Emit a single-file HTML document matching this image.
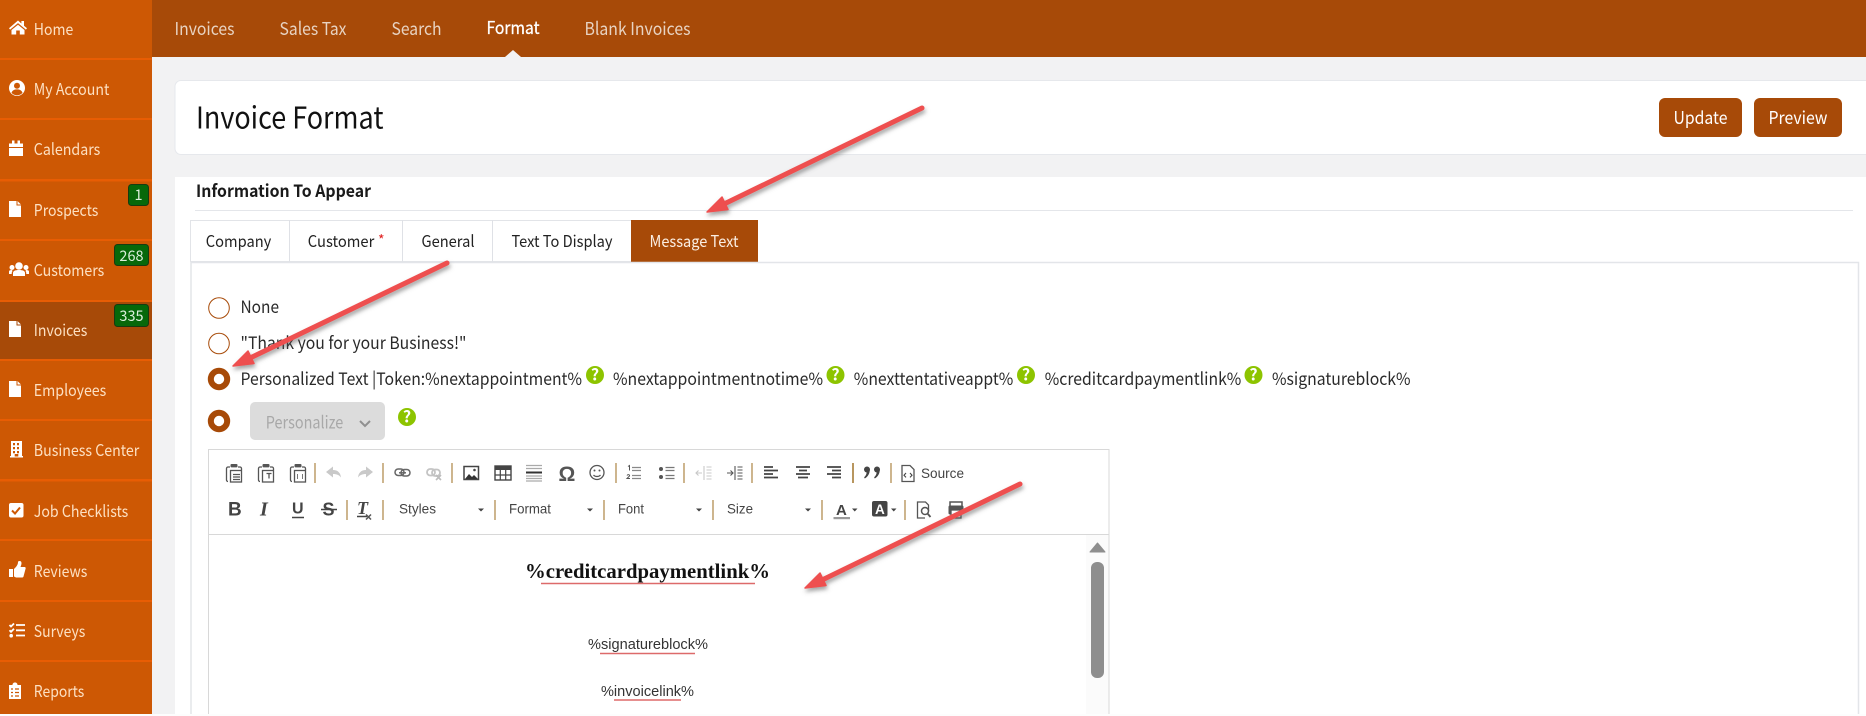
<!DOCTYPE html>
<html lang="en"><head><meta charset="utf-8"><title>Invoice Format</title>
<style>
html,body{margin:0;padding:0;background:#fff;width:1866px;height:716px;overflow:hidden}
svg{display:block}
text{font-family:"Noto Sans CJK JP","Liberation Sans",sans-serif}
.side{font-size:16px;fill:#fde0c2}
.nav{font-size:17.6px;fill:#e8d3c2}
.lab{font-size:17px;fill:#2a2a2a}
.tab{font-size:16px;fill:#222}
.ck{font-family:"Liberation Sans",sans-serif;font-size:14px;fill:#444}
.ic{fill:#fff}
.o{fill:#cd5804}
.sp{stroke:#b8965f;stroke-width:1.4}
.t{fill:none;stroke:#555;stroke-width:1.3}
.f{fill:#555}
.q{font-size:16px;font-weight:700;fill:#fff;text-anchor:middle}
.red{fill:none;stroke:#dd6a6a;stroke-width:1.6}
</style></head><body>
<svg xmlns="http://www.w3.org/2000/svg" width="1866" height="716" viewBox="0 0 1866 716">
<defs>
<filter id="sh" x="-10%" y="-10%" width="120%" height="130%"><feDropShadow dx="1" dy="3" stdDeviation="2" flood-color="#555" flood-opacity=".55"/></filter>
<g id="clip"><path class="t" d="M-4-6h-2a1.5 1.5 0 0 0-1.5 1.5V7A1.5 1.5 0 0 0-6 8.5M4-6h2a1.5 1.5 0 0 1 1.5 1.5v1.5"/><rect class="f" x="-3.5" y="-9" width="7" height="3.4" rx="1"/><rect class="t" x="-3.5" y="-2.5" width="11" height="11.5"/></g>
<path id="file" d="M0 0h7.500v4.500H12V16H0zM8.500 0 12 3.500H8.500z"/>
</defs>

<!-- page background -->
<rect width="1866" height="716" fill="#f2f2f3"/>
<!-- sidebar -->
<rect width="152" height="714" fill="#cd5804"/>
<rect y="301" width="152" height="58" fill="#a74a08"/>
<g fill="#e85d04">
<rect y="58" width="152" height="2"/><rect y="118" width="152" height="2"/><rect y="179" width="152" height="2.500"/><rect y="239" width="152" height="2"/><rect y="300" width="152" height="2"/><rect y="359" width="152" height="2"/><rect y="419" width="152" height="2"/><rect y="479" width="152" height="2.500"/><rect y="539" width="152" height="2"/><rect y="600" width="152" height="2"/><rect y="660" width="152" height="2"/>
</g>
<g class="side">
<text x="33.800" y="35" lengthAdjust="spacingAndGlyphs" textLength="39.500">Home</text>
<text x="33.800" y="95" lengthAdjust="spacingAndGlyphs" textLength="75.500">My Account</text>
<text x="33.800" y="155" lengthAdjust="spacingAndGlyphs" textLength="66.500">Calendars</text>
<text x="33.800" y="216" lengthAdjust="spacingAndGlyphs" textLength="64.500">Prospects</text>
<text x="33.800" y="276" lengthAdjust="spacingAndGlyphs" textLength="70.500">Customers</text>
<text x="33.800" y="336" lengthAdjust="spacingAndGlyphs" textLength="53.500">Invoices</text>
<text x="33.800" y="396" lengthAdjust="spacingAndGlyphs" textLength="72.500">Employees</text>
<text x="33.800" y="456" lengthAdjust="spacingAndGlyphs" textLength="105.500">Business Center</text>
<text x="33.800" y="517" lengthAdjust="spacingAndGlyphs" textLength="94.500">Job Checklists</text>
<text x="33.800" y="577" lengthAdjust="spacingAndGlyphs" textLength="53.500">Reviews</text>
<text x="33.800" y="637" lengthAdjust="spacingAndGlyphs" textLength="51.500">Surveys</text>
<text x="33.800" y="697" lengthAdjust="spacingAndGlyphs" textLength="50.500">Reports</text>
</g>
<!-- sidebar icons -->
<path class="ic" d="M18 20.500 9 28.200l1.100 1.400L18 23.100l7.900 6.500 1.100-1.400-3-2.500v-4.700h-2.600v2.500zM18 24.700 11.500 30v4.500h4.700V30.500h3.600v4h4.700V30z"/>
<circle class="ic" cx="17" cy="88" r="8"/><circle class="o" cx="17" cy="85.800" r="3"/><path class="o" d="M11.500 92.700c1-2.500 3-3.300 5.500-3.300s4.500.8 5.500 3.300a7 7 0 0 1-11 0z"/>
<path class="ic" d="M9 143.500h3v-3h2.500v3h3v-3H20v3h3v3.500H9zM9 148h14v8H9z"/>
<use href="#file" class="ic" x="9" y="201"/>
<g class="ic"><circle cx="19" cy="266" r="3.800"/><circle cx="12" cy="267.500" r="2.500"/><circle cx="26" cy="267.500" r="2.500"/><path d="M13 276v-3c0-2 2-3 6-3s6 1 6 3v3zM9 274v-2.500c0-1 1-1.500 3-1.500l.5 1c-.6.800-.8 1.500-.8 3zM29 274v-2.500c0-1-1-1.500-3-1.500l-.5 1c.6.800.8 1.500.8 3z"/></g>
<use href="#file" class="ic" x="9" y="321"/>
<use href="#file" class="ic" x="9" y="381"/>
<path class="ic" fill-rule="evenodd" d="M11 441h11v15h1v1.500H10V456h1zM13 443v2.200h2V443zm4 0v2.200h2V443zM13 447v2.200h2V447zm4 0v2.200h2V447zM13 451v2.200h2V451zm4 0v2.200h2V451zM14.700 454v2.500h3.600V454z"/>
<rect class="ic" x="9" y="503" width="14.500" height="14.500" rx="2"/><path d="M12 510.500l3 3 5-6" fill="none" stroke="#cd5804" stroke-width="2"/>
<path class="ic" d="M9 569h4v8H9zM14 569c2-2 4-4 4-7 0-1 2-1.500 3-.5 1 1.500.3 3.500-.5 5.500h4c1 0 1.500 1 1 2l-2 7.500c-.2.700-.8 1-1.500 1H16l-2-1z"/>
<g fill="none" stroke="#fff" stroke-width="1.800"><path d="M16 625h9M16 630.300h9M16 635.500h9M9.500 625l1.500 1.500 3-3M9.500 630.300l1.500 1.500 3-3"/></g><circle class="ic" cx="11.200" cy="635.700" r="1.800"/>
<path class="ic" d="M9 685h3.500c0-1.500 1-2.500 2.500-2.500s2.500 1 2.500 2.500H21v14H9z"/><path d="M15 689h4M15 692.500h4M15 696h4M11 689h2M11 692.500h2M11 696h2" stroke="#cd5804" stroke-width="1.300"/>
<!-- badges -->
<g fill="#07680a" stroke="#173c10" stroke-width="1">
<rect x="128.500" y="184.500" width="20" height="21" rx="3"/>
<rect x="114.500" y="244.500" width="34" height="21" rx="3"/>
<rect x="114.500" y="304.500" width="34" height="22" rx="3"/>
</g>
<g font-size="14.500" fill="#dcefdc" text-anchor="middle">
<text x="138.500" y="200">1</text><text x="131.500" y="261">268</text><text x="131.500" y="321">335</text>
</g>

<!-- top bar -->
<rect x="152" width="1714" height="57" fill="#a74a08"/>
<g class="nav">
<text x="174.500" y="35" lengthAdjust="spacingAndGlyphs" textLength="60">Invoices</text>
<text x="279.500" y="35" lengthAdjust="spacingAndGlyphs" textLength="67">Sales Tax</text>
<text x="391.500" y="35" lengthAdjust="spacingAndGlyphs" textLength="50">Search</text>
<text x="584.500" y="35" lengthAdjust="spacingAndGlyphs" textLength="106">Blank Invoices</text>
</g>
<text x="486.500" y="34" font-size="17.600" fill="#fff" stroke="#fff" stroke-width=".3" lengthAdjust="spacingAndGlyphs" textLength="53">Format</text>
<path d="M505 57l8-7 8 7z" fill="#f2f2f3"/>

<!-- header card -->
<rect x="175" y="80.500" width="1700" height="74" rx="6" fill="#fff" stroke="#e6e8ec"/>
<text x="196" y="128.700" font-size="30" fill="#111" lengthAdjust="spacingAndGlyphs" textLength="187.500">Invoice Format</text>
<rect x="1659" y="98" width="83" height="39" rx="6" fill="#a74a08"/>
<rect x="1754" y="98" width="88" height="39" rx="6" fill="#a74a08"/>
<text x="1673.500" y="124" font-size="17.500" fill="#fff" lengthAdjust="spacingAndGlyphs" textLength="54">Update</text>
<text x="1768.500" y="124" font-size="17.500" fill="#fff" lengthAdjust="spacingAndGlyphs" textLength="59">Preview</text>

<!-- main card -->
<rect x="175" y="177" width="1691" height="537" fill="#fff"/>
<text x="196" y="197" font-size="17" font-weight="700" fill="#1a1a1a" lengthAdjust="spacingAndGlyphs" textLength="175">Information To Appear</text>
<rect x="195" y="210" width="1658" height="1" fill="#e4e6ea"/>

<!-- tabs -->
<rect x="190.500" y="220.500" width="566" height="41" fill="#fff" stroke="#e2e4e8"/>
<g fill="#dfe1e6"><rect x="289" y="220" width="1" height="42"/><rect x="402" y="220" width="1" height="42"/><rect x="492" y="220" width="1" height="42"/></g>
<rect x="631" y="220" width="127" height="42" fill="#a74a08"/>
<g class="tab">
<text x="205.800" y="247" lengthAdjust="spacingAndGlyphs" textLength="65.500">Company</text>
<text x="307.800" y="247" lengthAdjust="spacingAndGlyphs" textLength="66.500">Customer</text>
<text x="421.500" y="247" lengthAdjust="spacingAndGlyphs" textLength="53">General</text>
<text x="511.500" y="247" lengthAdjust="spacingAndGlyphs" textLength="101">Text To Display</text>
</g>
<text x="378" y="245" font-size="14" fill="#e02020">*</text>
<text x="649.500" y="247" font-size="16" fill="#fbeee2" lengthAdjust="spacingAndGlyphs" textLength="89">Message Text</text>

<!-- panel -->
<path d="M191 714V262.500H1858.500V714" fill="none" stroke="#e3e5e9" stroke-width="1.500"/>

<!-- radios -->
<circle cx="219" cy="308" r="10.300" fill="#fff" stroke="#a74a08" stroke-width="1"/>
<circle cx="219" cy="343.500" r="10.300" fill="#fff" stroke="#a74a08" stroke-width="1"/>
<circle cx="219" cy="379" r="8.200" fill="#fff" stroke="#a74a08" stroke-width="6"/>
<circle cx="219" cy="421" r="8.200" fill="#fff" stroke="#a74a08" stroke-width="6"/>
<g class="lab">
<text x="240.500" y="313" lengthAdjust="spacingAndGlyphs" textLength="38.500">None</text>
<text x="240.500" y="349" lengthAdjust="spacingAndGlyphs" textLength="226">"Thank you for your Business!"</text>
<text x="240.500" y="385" lengthAdjust="spacingAndGlyphs" textLength="341.500">Personalized Text |Token:%nextappointment%</text>
<text x="613" y="385" lengthAdjust="spacingAndGlyphs" textLength="210">%nextappointmentnotime%</text>
<text x="853.800" y="385" lengthAdjust="spacingAndGlyphs" textLength="159.500">%nexttentativeappt%</text>
<text x="1044.800" y="385" lengthAdjust="spacingAndGlyphs" textLength="196.500">%creditcardpaymentlink%</text>
<text x="1272" y="385" lengthAdjust="spacingAndGlyphs" textLength="138.500">%signatureblock%</text>
</g>
<g fill="#8dc400"><circle cx="595" cy="375" r="9"/><circle cx="835.500" cy="375" r="9"/><circle cx="1026" cy="375" r="9"/><circle cx="1253.500" cy="375" r="9"/><circle cx="407" cy="417" r="9"/></g>
<g class="q"><text x="595" y="380.500">?</text><text x="835.500" y="380.500">?</text><text x="1026" y="380.500">?</text><text x="1253.500" y="380.500">?</text><text x="407" y="422.500">?</text></g>

<!-- personalize select -->
<rect x="250" y="402" width="135" height="38" rx="5" fill="#dcdcdc"/>
<text x="265.800" y="428.700" font-size="17" fill="#a8a8a8" lengthAdjust="spacingAndGlyphs" textLength="77.500">Personalize</text>
<path d="M360 421l5 5 5-5" fill="none" stroke="#909090" stroke-width="2"/>

<!-- editor -->
<rect x="208.500" y="449.500" width="900.500" height="270" fill="#fff" stroke="#d8d8d8"/>
<rect x="209" y="534" width="900" height="1" fill="#d8d8d8"/>
<rect x="1086" y="535" width="22.500" height="179" fill="#fbfbfb"/>

<!-- toolbar separators -->
<g class="sp">
<path d="M315 463v20M383 463v20M452 463v20M616 463v20M684 463v20M752 463v20M891 463v20"/>
<path d="M853 463v20" stroke-width="2"/>
<path d="M347 500v20M383 500v20M495 500v20M604 500v20M713 500v20M822 500v20M905 500v20"/>
</g>

<!-- toolbar row 1 -->
<use href="#clip" x="234" y="473"/><path class="t" d="M233 474.500h7M233 477h7M233 479.500h7" stroke-width="1"/>
<use href="#clip" x="266" y="473"/><path class="t" d="M269 473.500v5M266.500 473.500h5" stroke-width="1"/>
<use href="#clip" x="298" y="473"/><path d="M297.500 474v5M302.500 474v5" stroke="#777" stroke-width="1"/>
<path fill="#c9c9c9" d="M326 472l7-5.500v3.500c5 0 7.500 3 8 7.500-2-2.500-4-3.500-8-3.500v3.500z"/>
<path fill="#c9c9c9" d="M373 472l-7-5.500v3.500c-5 0-7.500 3-8 7.500 2-2.500 4-3.500 8-3.500v3.500z"/>
<g fill="none" stroke="#666" stroke-width="1.500"><rect x="395" y="469" width="9" height="6.500" rx="3.200"/><rect x="401" y="469.500" width="9" height="6.500" rx="3.200"/><path d="M399 472.800h7"/></g>
<g fill="none" stroke="#c4c4c4" stroke-width="1.800"><rect x="427" y="469" width="8" height="6.500" rx="3.200"/><rect x="432" y="469.500" width="8" height="6.500" rx="3.200"/></g>
<path d="M436 475l5 5m0-5l-5 5" stroke="#bdbdbd" stroke-width="1.600"/>
<rect x="464" y="466.500" width="14.500" height="13" fill="#fff" stroke="#444" stroke-width="1.500"/><path d="M465 479l4-5 3 3 2-2 4 4z" fill="#333"/><circle cx="474.500" cy="470" r="1.300" fill="#444"/>
<rect x="495" y="466" width="16" height="14" fill="#fff" stroke="#444" stroke-width="1.400"/><rect x="495" y="466" width="16" height="4" fill="#444"/><path d="M500.300 470v10M505.700 470v10M495 475h16" stroke="#444" stroke-width="1.200"/>
<path d="M526 465.500h16M526 468.500h16M526 476h16M526 478.500h16M526 481h16" stroke="#aaa" stroke-width="1.300"/><path d="M526 472.500h16" stroke="#333" stroke-width="2"/>
<text x="558.500" y="481" font-size="21" font-weight="700" fill="#555" style="font-family:'Liberation Sans',sans-serif">Ω</text>
<circle cx="597" cy="472.500" r="7" fill="none" stroke="#555" stroke-width="1.300"/><circle cx="594.500" cy="470.500" r="1" fill="#555"/><circle cx="599.500" cy="470.500" r="1" fill="#555"/><path d="M593.500 475c1.500 2 5.500 2 7 0" fill="none" stroke="#555" stroke-width="1.200"/>
<path d="M632 467.500h9M632 470.500h9M632 475.500h9M632 478.500h9" stroke="#888" stroke-width="1.300"/><path d="M628 466.500l1.500-1v5M627 475.500c1-1.500 3-.8 2.500.5l-2.500 2.500h3" fill="none" stroke="#555" stroke-width="1"/>
<circle cx="661" cy="469" r="2" fill="#555"/><circle cx="661" cy="477" r="2" fill="#555"/><path d="M665.500 467.500h9M665.500 470.500h9M665.500 475.500h9M665.500 478.500h9" stroke="#777" stroke-width="1.300"/>
<path d="M696 473h6M698.500 470.500l-2.500 2.500 2.500 2.500M704 466v14M706.500 467h5M706.500 470h5M706.500 473h5M706.500 476h5M706.500 479h5" fill="none" stroke="#c8c8c8" stroke-width="1.100"/>
<path d="M727 473h6M730.500 470.500l2.500 2.500-2.500 2.500M735 466v14M737.500 467h5M737.500 470h5M737.500 473h5M737.500 476h5M737.500 479h5" fill="none" stroke="#555" stroke-width="1.100"/>
<g stroke="#444" stroke-width="1.700"><path d="M764 467h9M764 470.500h14M764 474h9M764 477.500h14"/><path d="M796 467h14M799 470.500h8M796 474h14M798 477.500h10"/><path d="M827 467h14M832 470.500h9M827 474h14M832 477.500h9"/></g>
<g fill="#444"><circle cx="867" cy="469.500" r="3"/><circle cx="877" cy="469.500" r="3"/><path d="M869.800 469.500c0 4-1.800 7-5 9l-.7-1.200c1.500-1.200 2.500-3 2.500-5zM879.800 469.500c0 4-1.800 7-5 9l-.7-1.200c1.500-1.200 2.500-3 2.500-5z"/></g>
<path class="t" d="M902 465.500h8l4 4v12h-12z" stroke-width="1.200"/><path d="M906 473l-2 2.200 2 2.200M910 473l2 2.200-2 2.200" fill="none" stroke="#444" stroke-width="1.100"/>
<text class="ck" x="921" y="478" lengthAdjust="spacingAndGlyphs" textLength="43">Source</text>

<!-- toolbar row 2 -->
<g fill="#444" font-weight="700">
<text x="228" y="515.500" font-size="19" style="font-family:'Liberation Sans',sans-serif">B</text>
<text x="260" y="515.500" font-size="20" font-style="italic" style="font-family:'Liberation Serif',serif">I</text>
<text x="292" y="513.500" font-size="16" style="font-family:'Liberation Sans',sans-serif">U</text>
<text x="322.500" y="515.500" font-size="18" style="font-family:'Liberation Sans',sans-serif">S</text>
<text x="357" y="514" font-size="18" font-style="italic" style="font-family:'Liberation Serif',serif">T</text>
</g>
<path d="M292 517.500h12" stroke="#444" stroke-width="1.500"/>
<path d="M321 509.500h16" stroke="#444" stroke-width="1.500"/>
<path d="M357 516.500h10" stroke="#444" stroke-width="1.500"/>
<path d="M366 514.500l5 5m0-5l-5 5" stroke="#555" stroke-width="1.500"/>
<text class="ck" x="399" y="513.700" lengthAdjust="spacingAndGlyphs" textLength="37">Styles</text>
<text class="ck" x="509" y="513.700" lengthAdjust="spacingAndGlyphs" textLength="42">Format</text>
<text class="ck" x="618" y="513.700" lengthAdjust="spacingAndGlyphs" textLength="26">Font</text>
<text class="ck" x="727" y="513.700" lengthAdjust="spacingAndGlyphs" textLength="26">Size</text>
<path fill="#444" d="M478 508.500h6l-3 3zM587 508.500h6l-3 3zM696 508.500h6l-3 3zM805 508.500h6l-3 3zM852 508.500h5.500l-2.750 3zM891 508.500h5.500l-2.750 3z"/>
<text x="836" y="515" font-size="15" font-weight="700" fill="#444" style="font-family:'Liberation Sans',sans-serif">A</text>
<rect x="833.500" y="517" width="16.500" height="2.200" fill="#999"/>
<rect x="872" y="501" width="15.500" height="15.500" rx="2" fill="#444"/>
<text x="875" y="514" font-size="13.500" font-weight="700" fill="#fff" style="font-family:'Liberation Sans',sans-serif">A</text>
<path class="t" d="M925 518h-7.500v-16h8l3 3v6" stroke-width="1.200"/><circle cx="925" cy="511" r="3.500" fill="#fff" stroke="#555" stroke-width="1.500"/><path d="M927.500 513.500l3 3.500" stroke="#555" stroke-width="1.800"/>
<path d="M950 506v-4h12v4" fill="none" stroke="#555" stroke-width="1.500"/><rect x="948.500" y="505.500" width="15" height="9" rx="1.500" fill="#555"/><rect x="951" y="510" width="10" height="8" fill="#fff" stroke="#555" stroke-width="1.300"/>

<!-- editor content -->
<text x="525" y="578" font-size="21" font-weight="700" fill="#111" lengthAdjust="spacingAndGlyphs" textLength="245" style="font-family:'Liberation Serif',serif">%creditcardpaymentlink%</text>
<path class="red" d="M541 583.500h214"/>
<text x="588" y="649" font-size="15" fill="#333" lengthAdjust="spacingAndGlyphs" textLength="120" style="font-family:'Liberation Sans',sans-serif">%signatureblock%</text>
<path class="red" d="M600 653.500h95"/>
<text x="601" y="696" font-size="15" fill="#333" lengthAdjust="spacingAndGlyphs" textLength="93" style="font-family:'Liberation Sans',sans-serif">%invoicelink%</text>
<path class="red" d="M614 700h67"/>
<!-- scrollbar -->
<path d="M1090 552l7.500-9 7.500 9z" fill="#8e8e8e" stroke="#8e8e8e" stroke-linejoin="round"/>
<rect x="1091" y="562" width="13" height="116" rx="6" fill="#8e8e8e"/>

<!-- bottom strip -->
<rect y="714" width="1866" height="2" fill="#fdfdfd"/>

<!-- annotation arrows -->
<g filter="url(#sh)" fill="#ee4f4f" stroke="#ee4f4f" stroke-linejoin="round">
<path d="M922 108 722 205" fill="none" stroke-width="5" stroke-linecap="round"/><path d="M707 212l21-2.500-6-12.500z" stroke-width="1.500"/>
<path d="M447 263 248 359" fill="none" stroke-width="5" stroke-linecap="round"/><path d="M233 366l21-2.500-6-12.500z" stroke-width="1.500"/>
<path d="M1020 484 820 581" fill="none" stroke-width="5" stroke-linecap="round"/><path d="M805 588l21-2.500-6-12.500z" stroke-width="1.500"/>
</g>
</svg>
</body></html>
